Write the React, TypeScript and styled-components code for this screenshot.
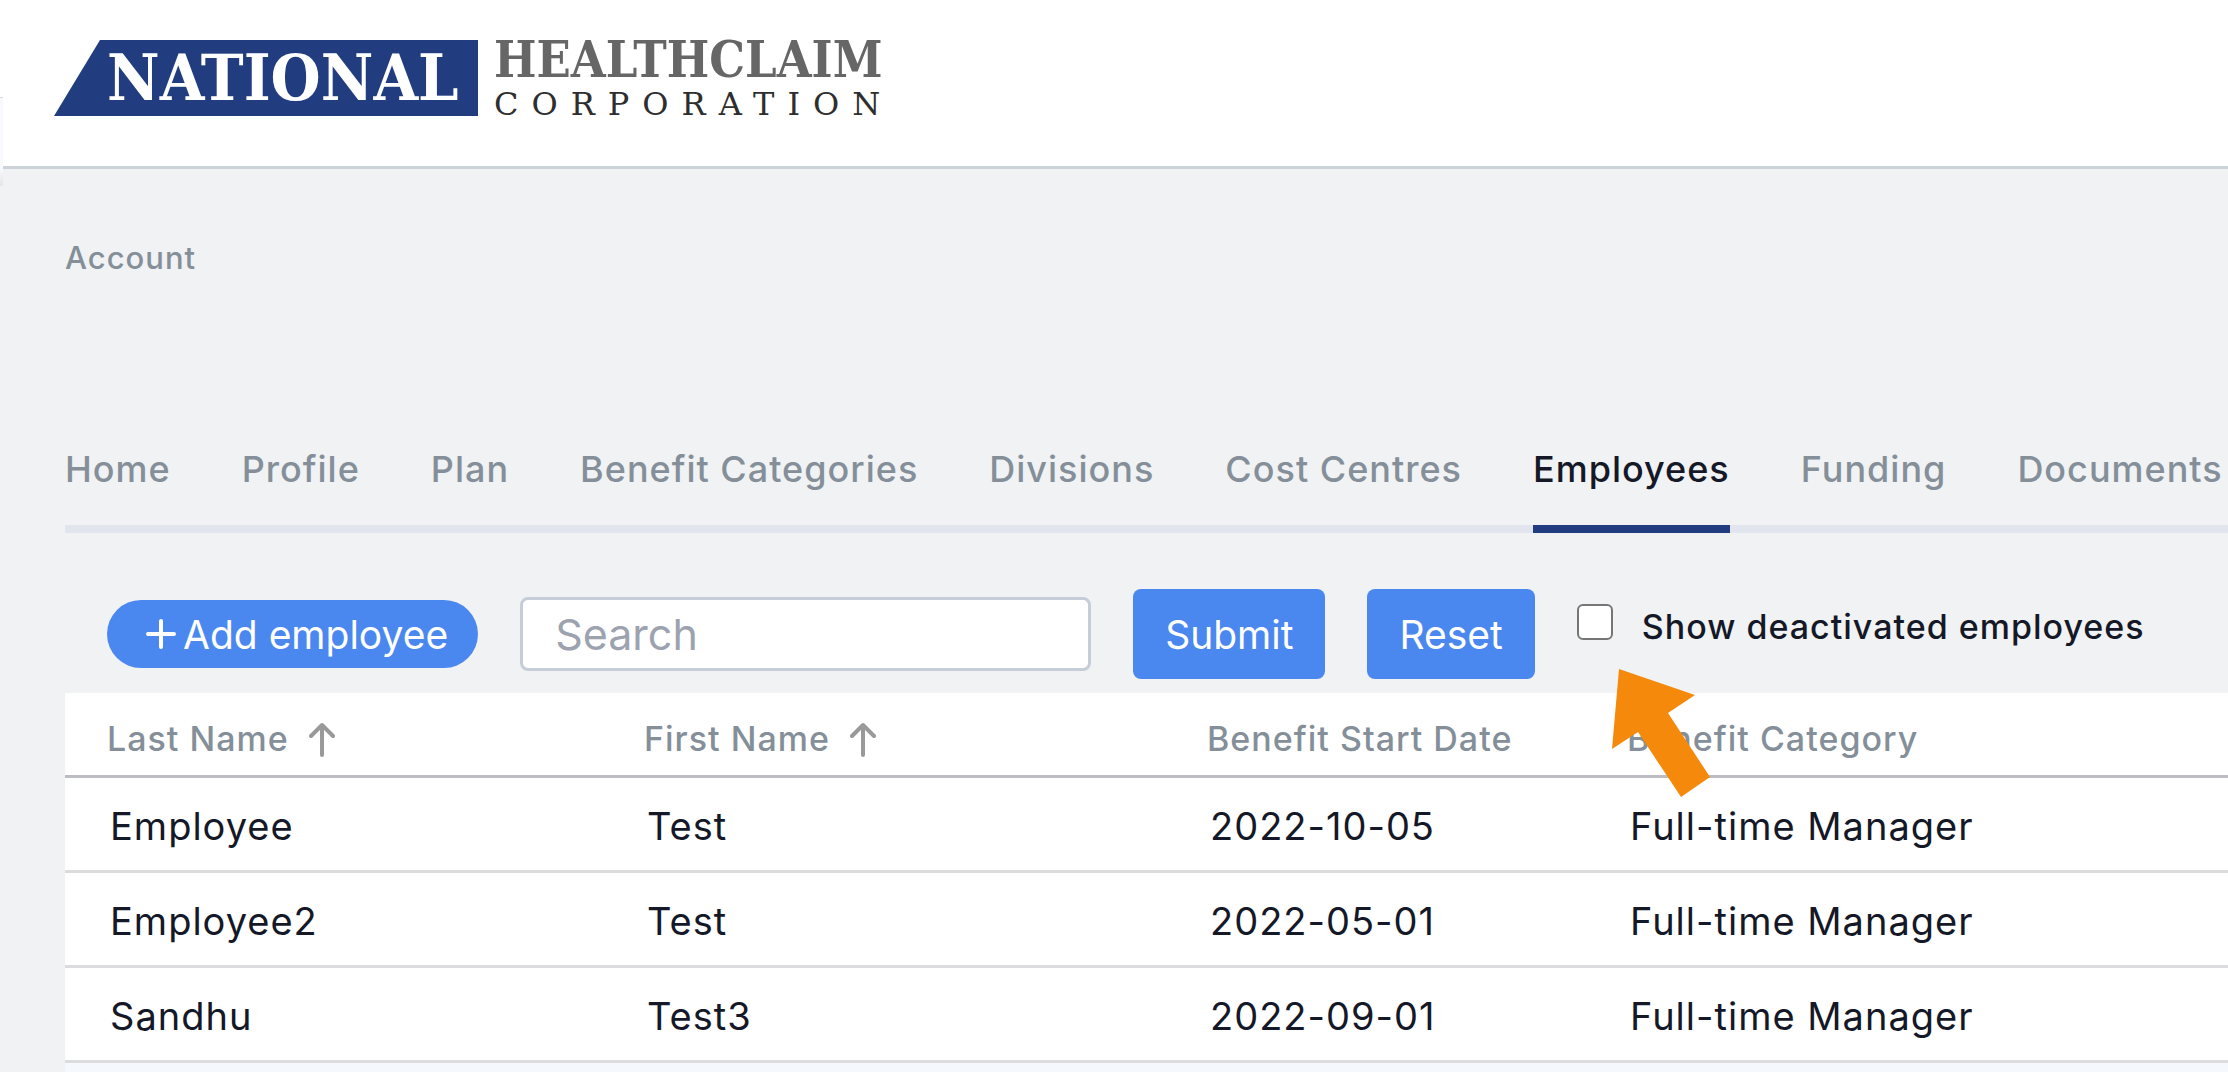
import React, { useState } from "react";
import styled, { createGlobalStyle } from "styled-components";

const color = {
  page: "#f0f2f4",
  brand: "#213c7f",
  action: "#4a88f0",
  muted: "#848f99",
  ink: "#141827",
  track: "#e2e5ed",
  line: "#cbd2d9",
};

const GlobalStyle = createGlobalStyle`
  *, *::before, *::after { box-sizing: border-box; }
  body {
    margin: 0;
    background: ${color.page};
    color: ${color.ink};
    font-family: Inter, "Liberation Sans", sans-serif;
    overflow: hidden;
  }
  button, input { font: inherit; }
`;

const Shell = styled.div`
  display: grid;
  grid-template-columns: 3px minmax(0, 1fr);
  height: 100vh;
  overflow: hidden;
`;

const Rail = styled.div`
  display: flex;
  flex-direction: column;
  padding-top: 97px;
  background: linear-gradient(#ffffff 97px, ${color.page} 97px);
`;

const RailCard = styled.div`
  height: 89px;
  border-top: 1px solid #d3d8e0;
  background: linear-gradient(#f7f9fc 80%, #e4e6ea);
`;

const Header = styled.header`
  display: flex;
  align-items: flex-start;
  height: 169px;
  padding: 40px 51px 0;
  background: #ffffff;
  border-bottom: 3px solid ${color.line};
`;

const Logo = styled.a`
  display: flex;
  gap: 16px;
  color: inherit;
  text-decoration: none;
  font-family: "DejaVu Serif Condensed", "DejaVu Serif", serif;
  white-space: nowrap;
`;

const LogoBadge = styled.span`
  width: 424px;
  height: 76px;
  padding-left: 53px;
  background: ${color.brand};
  clip-path: polygon(46px 0, 100% 0, 100% 100%, 0 100%);
  color: #ffffff;
  font-size: 64px;
  font-weight: 700;
  line-height: 76px;
`;

const LogoWords = styled.span`
  display: flex;
  flex-direction: column;
  gap: 6px;
`;

const LogoName = styled.span`
  color: #666666;
  font-size: 50px;
  font-weight: 700;
  line-height: 40px;
`;

const LogoSuffix = styled.span`
  color: #2e2e2e;
  font-family: "DejaVu Serif", serif;
  font-size: 32px;
  letter-spacing: 13px;
  line-height: 36px;
`;

const Main = styled.main`
  padding: 70px 0 0 62px;
`;

const Crumb = styled.p`
  margin: 0;
  color: ${color.muted};
  font-size: 31px;
  font-weight: 500;
  line-height: 38px;
  letter-spacing: 1px;
`;

const Tabs = styled.nav`
  display: flex;
  gap: 71px;
  margin-top: 171px;
  box-shadow: inset 0 -8px ${color.track};
  overflow: hidden;
`;

const Tab = styled.a<{ $active?: boolean }>`
  flex: none;
  height: 85px;
  border-bottom: 8px solid ${(p) => (p.$active ? color.brand : "transparent")};
  color: ${(p) => (p.$active ? color.ink : color.muted)};
  font-size: 36px;
  font-weight: 500;
  letter-spacing: 1px;
  line-height: 42px;
  text-decoration: none;
  white-space: nowrap;
`;

const Toolbar = styled.form`
  display: flex;
  align-items: center;
  gap: 42px;
  padding: 56px 42px 14px;
`;

const AddButton = styled.button`
  display: flex;
  align-items: center;
  gap: 6px;
  height: 68px;
  padding: 0 30px 0 38px;
  border: 0;
  border-radius: 34px;
  background: ${color.action};
  color: #ffffff;
  font-size: 39px;
  white-space: nowrap;
`;

const SearchInput = styled.input`
  width: 571px;
  height: 74px;
  padding: 0 32px;
  border: 3px solid #c5ced8;
  border-radius: 8px;
  background: #ffffff;
  color: ${color.ink};
  font-size: 43px;
  outline: none;
  &::placeholder { color: #9ca3af; opacity: 1; }
`;

const ActionButton = styled.button`
  height: 90px;
  padding: 0 32px;
  border: 0;
  border-radius: 8px;
  background: ${color.action};
  color: #ffffff;
  font-size: 39px;
`;

const Toggle = styled.div`
  position: relative;
  display: flex;
  align-items: center;
  gap: 29px;
  height: 68px;
  padding-bottom: 24px;
`;

const Checkbox = styled.input`
  appearance: none;
  width: 36px;
  height: 36px;
  margin: 0;
  border: 2px solid #767676;
  border-radius: 6px;
  background: #ffffff;
  &:checked { background: ${color.action}; }
`;

const ToggleLabel = styled.label`
  padding-top: 10px;
  font-size: 34px;
  font-weight: 500;
  letter-spacing: 1px;
  line-height: 40px;
  white-space: nowrap;
`;

const Pointer = styled.svg`
  position: absolute;
  top: 69px;
  left: 35px;
  width: 98px;
  height: 128px;
  pointer-events: none;
  z-index: 1;
`;

const Table = styled.table`
  width: 100%;
  table-layout: fixed;
  border-collapse: separate;
  border-spacing: 0;
  background: #ffffff;
`;

const Col = styled.col<{ $width?: number }>`
  width: ${(p) => (p.$width ? `${p.$width}px` : "auto")};
`;

const HeadCell = styled.th`
  height: 85px;
  padding: 8px 0 0 42px;
  border-bottom: 3px solid #bcbdc2;
  color: ${color.muted};
  font-size: 34px;
  font-weight: 500;
  letter-spacing: 1px;
  text-align: left;
  white-space: nowrap;
`;

const SortButton = styled.button`
  display: flex;
  align-items: center;
  gap: 20px;
  padding: 0;
  border: 0;
  background: none;
  color: inherit;
  letter-spacing: inherit;
`;

const Row = styled.tr<{ $tinted?: boolean }>`
  background: ${(p) => (p.$tinted ? "#f5f8fd" : "#ffffff")};
`;

const Cell = styled.td`
  height: 95px;
  padding: 4px 0 0 45px;
  border-bottom: 3px solid #dcdcde;
  font-size: 38px;
  letter-spacing: 1px;
  white-space: nowrap;
`;

const tabs = [
  "Home",
  "Profile",
  "Plan",
  "Benefit Categories",
  "Divisions",
  "Cost Centres",
  "Employees",
  "Funding",
  "Documents",
];

const employees = [
  ["Employee", "Test", "2022-10-05", "Full-time Manager"],
  ["Employee2", "Test", "2022-05-01", "Full-time Manager"],
  ["Sandhu", "Test3", "2022-09-01", "Full-time Manager"],
];

const PlusIcon = () => (
  <svg width="32" height="32" viewBox="0 0 32 32" fill="none" stroke="currentColor" strokeWidth="4" strokeLinecap="round" aria-hidden="true">
    <path d="M16 3v26M3 16h26" />
  </svg>
);

const SortIcon = () => (
  <svg width="26" height="38" viewBox="0 0 26 38" fill="none" stroke="#999999" strokeWidth="4" strokeLinecap="round" strokeLinejoin="round" aria-hidden="true">
    <path d="M13 36V6M2 17 13 6l11 11" />
  </svg>
);

export default function App() {
  const [query, setQuery] = useState("");
  const [deactivated, setDeactivated] = useState(false);

  return (
    <>
      <GlobalStyle />
      <Shell>
        <Rail>
          <RailCard />
        </Rail>
        <div>
          <Header>
            <Logo href="#">
              <LogoBadge>NATIONAL</LogoBadge>
              <LogoWords>
                <LogoName>HEALTHCLAIM</LogoName>
                <LogoSuffix>CORPORATION</LogoSuffix>
              </LogoWords>
            </Logo>
          </Header>
          <Main>
            <Crumb>Account</Crumb>
            <Tabs>
              {tabs.map((name) => (
                <Tab key={name} href="#" $active={name === "Employees"}>
                  {name}
                </Tab>
              ))}
            </Tabs>
            <Toolbar onSubmit={(e) => e.preventDefault()}>
              <AddButton type="button">
                <PlusIcon />
                Add employee
              </AddButton>
              <SearchInput
                aria-label="Search"
                placeholder="Search"
                value={query}
                onChange={(e) => setQuery(e.target.value)}
              />
              <ActionButton type="submit">Submit</ActionButton>
              <ActionButton type="button" onClick={() => setQuery("")}>
                Reset
              </ActionButton>
              <Toggle>
                <Checkbox
                  id="deactivated"
                  type="checkbox"
                  checked={deactivated}
                  onChange={(e) => setDeactivated(e.target.checked)}
                />
                <ToggleLabel htmlFor="deactivated">Show deactivated employees</ToggleLabel>
                <Pointer viewBox="0 0 98 128" aria-hidden="true">
                  <path d="M7 0 83 26 56 44 98 108 69 128 26 63 0 80Z" fill="#f5890c" />
                </Pointer>
              </Toggle>
            </Toolbar>
            <Table>
              <colgroup>
                <Col $width={537} />
                <Col $width={563} />
                <Col $width={420} />
                <Col />
              </colgroup>
              <thead>
                <tr>
                  <HeadCell>
                    <SortButton type="button">
                      Last Name
                      <SortIcon />
                    </SortButton>
                  </HeadCell>
                  <HeadCell>
                    <SortButton type="button">
                      First Name
                      <SortIcon />
                    </SortButton>
                  </HeadCell>
                  <HeadCell>Benefit Start Date</HeadCell>
                  <HeadCell>Benefit Category</HeadCell>
                </tr>
              </thead>
              <tbody>
                {employees.map((cells) => (
                  <Row key={cells[0]}>
                    {cells.map((text, i) => (
                      <Cell key={i}>{text}</Cell>
                    ))}
                  </Row>
                ))}
                <Row $tinted>
                  <Cell colSpan={4} />
                </Row>
              </tbody>
            </Table>
          </Main>
        </div>
      </Shell>
    </>
  );
}
